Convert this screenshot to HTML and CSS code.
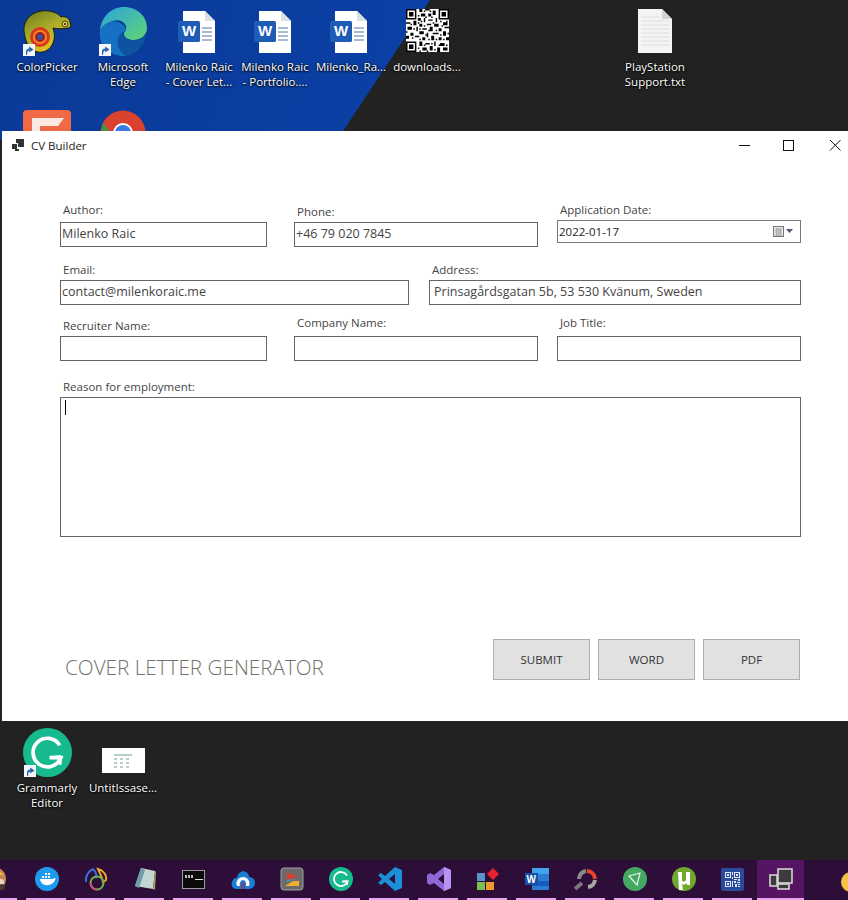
FILE: index.html
```html
<!DOCTYPE html>
<html>
	<head>
		<meta charset="utf-8">
		<title>CV Builder</title>
		<link rel="stylesheet" href="styles.css">
	</head>
	<body>
		<svg class="defs" width="0" height="0">
			<defs>
				<linearGradient id="edgeA" x1="0" y1="0" x2="1" y2="1">
					<stop offset="0" stop-color="#2aa3e0"/>
					<stop offset="1" stop-color="#5fd66f"/>
				</linearGradient>
				<linearGradient id="chamA" x1="0" y1="0" x2="0.6" y2="1">
					<stop offset="0" stop-color="#6d7a1c"/>
					<stop offset="0.5" stop-color="#a8ab2a"/>
					<stop offset="1" stop-color="#f0c81e"/>
				</linearGradient>
				<symbol id="word" viewBox="0 0 44 44">
					<path d="M6 1h22l10 10v32H6z" fill="#fff"/>
					<path d="M28 1v10h10z" fill="#dcdfe4"/>
					<path d="M25 17h10v2H25zM25 21h10v2H25zM25 25h10v2H25zM25 29h10v2H25z" fill="#a6b9d6"/>
					<rect x="1" y="11" width="22" height="21" rx="1.5" fill="#1f5cb8"/>
				</symbol>
				<symbol id="short" viewBox="0 0 12 12">
					<rect width="12" height="12" fill="#f4f6fa"/>
					<path d="M3 11V7.500Q3 4.800 6.200 4.500V2.500L10.500 5.500 6.200 8.500V6.600Q4.600 6.800 4.300 8.500L4 11z" fill="#2a62b0"/>
				</symbol>
				<symbol id="gcircle" viewBox="0 0 48 48">
					<circle cx="24" cy="24" r="24" fill="#17b98f"/>
					<path d="M36 17A14 14 0 1 0 37 29H26" fill="none" stroke="#fff" stroke-width="3.600"/>
					<path d="M37 28l-1 8M37 28l-8 1" fill="none" stroke="#fff" stroke-width="3.200"/>
				</symbol>
				<symbol id="qr" viewBox="0 0 29 29">
					<path fill="#fff" d="M0 0h29v29H0z"/>
					<path fill="#000" fill-rule="evenodd" d="M0 0h7v7H0zM1 1v5h5V1zM2 2h3v3H2zM22 0h7v7h-7zM23 1v5h5V1zM24 2h3v3h-3zM0 22h7v7H0zM1 23v5h5v-5zM2 24h3v3H2z"/>
					<path fill="#000" d="M9 0h2v2H9zM13 0h3v1h-3zM18 1h2v3h-2zM10 3h3v2h-3zM15 3h2v2h-2zM8 6h2v2H8zM12 6h1v3h-1zM15 7h3v1h-3zM20 6h1v3h-1zM0 9h3v1H0zM5 8h2v3H5zM9 10h2v2H9zM14 10h3v1h-3zM19 10h3v2h-3zM25 9h3v2h-3zM1 12h3v2H1zM7 12h1v3H7zM11 13h3v1h-3zM16 12h2v3h-2zM22 13h2v2h-2zM26 12h3v1h-3zM3 16h2v2H3zM9 15h3v2H9zM14 16h1v3h-1zM19 16h3v1h-3zM25 15h2v3h-2zM0 18h2v2H0zM6 18h3v1H6zM11 19h2v2h-2zM17 18h2v3h-2zM22 19h2v2h-2zM27 19h2v2h-2zM9 22h2v3H9zM13 23h3v1h-3zM19 22h1v3h-1zM23 23h3v2h-3zM11 26h3v2h-3zM16 25h2v3h-2zM21 26h2v3h-2zM25 26h3v2h-3zM12 1h1v1h-1zM16 1h1v1h-1zM8 4h1v1H8zM13 5h1v1h-1zM17 5h1v1h-1zM10 8h1v1h-1zM3 10h1v1H3zM8 9h1v1H8zM12 11h1v1h-1zM18 9h1v1h-1zM23 8h1v1h-1zM27 8h1v1h-1zM5 13h1v1H5zM9 13h1v1H9zM15 14h1v1h-1zM20 14h1v1h-1zM24 11h1v1h-1zM0 15h1v1H0zM13 17h1v1h-1zM18 16h1v1h-1zM23 17h1v1h-1zM28 16h1v1h-1zM4 19h1v1H4zM9 20h1v1H9zM15 20h1v1h-1zM20 20h1v1h-1zM25 20h1v1h-1zM8 26h1v1H8zM12 24h1v1h-1zM17 23h1v1h-1zM22 24h1v1h-1zM27 24h1v1h-1zM14 28h1v1h-1zM19 27h1v1h-1zM9 28h1v1H9z"/>
				</symbol>
			</defs>
		</svg>

		<div class="wallpaper"></div>

		<div class="icons icons-top">
			<div class="icon">
				<div class="pic">
					<svg width="50" height="46" viewBox="0 0 50 46">
						<path d="M2 22C1 9 13 0 27 2c6 1 10 3 12 6 3-1 8 0 9 5 1 3 1 6-2 6-5 1-11 1-15 0 2 6 2 12-1 17-3 6-11 9-17 6C6 39 3 31 2 22z" fill="url(#chamA)" stroke="#1a1a0a" stroke-width="1"/>
						<circle cx="18" cy="28" r="10" fill="#d9381e"/>
						<circle cx="18" cy="28" r="7" fill="#f28a1c"/>
						<circle cx="18" cy="28" r="5" fill="#9c1c2c"/>
						<circle cx="18" cy="28" r="2.800" fill="#2a55a8"/>
						<circle cx="43" cy="15" r="3" fill="#e0d14a" stroke="#222" stroke-width=".8"/>
						<circle cx="43" cy="15" r="1" fill="#222"/>
					</svg>
					<svg class="shortcut"><use href="#short"/></svg>
				</div>
				<span>ColorPicker</span>
			</div>
			<div class="icon">
				<div class="pic edge">
					<svg width="50" height="50" viewBox="0 0 50 50">
						<path d="M2 24C3 10 13 0 26 0c13 0 23 9 23 21 0 7-6 12-13 12-5 0-10-2-10-6 0-3 3-4 2-8-2-5-8-7-13-5C8 16 4 19 2 24z" fill="url(#edgeA)"/>
						<path d="M2 24c3-7 11-11 18-9 5 2 8 5 8 9-5 1-9 6-8 13 1 5 4 9 8 12C13 50 0 40 2 24z" fill="#1571c4"/>
						<path d="M26 27c0 4 5 6 10 6 5 0 9-2 12-6-1 11-10 21-20 22-5-3-8-7-8-12-1-7 3-12 6-10z" fill="#0d539f"/>
					</svg>
					<svg class="shortcut"><use href="#short"/></svg>
				</div>
				<span>Microsoft<br>Edge</span>
			</div>
			<div class="icon">
				<div class="pic doc"><svg width="44" height="44"><use href="#word"/></svg><b class="w">W</b></div>
				<span>Milenko Raic<br>- Cover Let...</span>
			</div>
			<div class="icon">
				<div class="pic doc"><svg width="44" height="44"><use href="#word"/></svg><b class="w">W</b></div>
				<span>Milenko Raic<br>- Portfolio....</span>
			</div>
			<div class="icon">
				<div class="pic doc"><svg width="44" height="44"><use href="#word"/></svg><b class="w">W</b></div>
				<span>Milenko_Ra...</span>
			</div>
			<div class="icon">
				<div class="pic"><svg width="43" height="43"><use href="#qr"/></svg></div>
				<span>downloads...</span>
			</div>
			<div class="icon txt">
				<div class="pic">
					<svg width="34" height="44" viewBox="0 0 34 44">
						<path d="M0 0h24l10 10v34H0z" fill="#f4f4f4"/>
						<path d="M24 0v10h10z" fill="#d4d4d4"/>
						<path d="M3 8h19M3 12h28M3 16h28M3 20h28M3 24h28M3 28h28M3 32h28M3 36h28" stroke="#dedede"/>
					</svg>
				</div>
				<span>PlayStation<br>Support.txt</span>
			</div>
			<div class="icon second">
				<div class="pic">
					<svg width="50" height="50" viewBox="0 0 50 50">
						<rect x="1" width="48" height="50" rx="4" fill="#ef6a45"/>
						<path d="M10 8h32l-6 8H18v20h-8z" fill="#fbe9e2"/>
					</svg>
				</div>
			</div>
			<div class="icon second">
				<div class="pic">
					<svg width="46" height="46" viewBox="0 0 46 46">
						<circle cx="23" cy="23" r="22.500" fill="#d8422e"/>
						<path d="M3 12L14 30 23 45C10 45 0 35 1 23z" fill="#2f9e44"/>
						<circle cx="23" cy="23" r="10" fill="#fff"/>
						<circle cx="23" cy="23" r="8" fill="#3b78e0"/>
					</svg>
				</div>
			</div>
		</div>

		<div class="icons icons-bottom">
			<div class="icon">
				<div class="pic">
					<svg width="49" height="49"><use href="#gcircle"/></svg>
					<svg class="shortcut"><use href="#short"/></svg>
				</div>
				<span>Grammarly<br>Editor</span>
			</div>
			<div class="icon">
				<div class="pic thumb">
					<svg width="43" height="25" viewBox="0 0 43 25">
						<rect width="43" height="25" fill="#fff"/>
						<path d="M12 6h18v2H12zM12 10h3v2h-3zM18 10h3v2h-3zM24 10h3v2h-3zM12 14h3v2h-3zM18 14h3v2h-3zM24 14h3v2h-3zM12 18h3v2h-3zM18 18h3v2h-3zM24 18h3v2h-3z" fill="#b9cfc9"/>
					</svg>
				</div>
				<span>UntitIssase...</span>
			</div>
		</div>

		<div class="window">
			<div class="titlebar">
				<svg class="appicon" width="12" height="12" viewBox="0 0 12 12">
					<path d="M0 5h5v5H0zM4 0h8v8H6V4H4zM3 10h4v2H3z" fill="#333"/>
				</svg>
				<span class="apptitle">CV Builder</span>
				<div class="controls">
					<svg width="46" height="12" viewBox="0 0 46 12"><path d="M28 6.500h11" stroke="#111"/></svg>
					<svg width="46" height="12" viewBox="0 0 46 12"><rect x="26.500" y="1.500" width="10" height="10" fill="none" stroke="#111"/></svg>
					<svg width="46" height="12" viewBox="0 0 46 12"><path d="M27 1l10.500 10.500M37.500 1L27 11.500" stroke="#111"/></svg>
				</div>
			</div>

			<form class="form">
				<div class="row row1">
					<div class="field w207 low"><label>Author:</label><input type="text" value="Milenko Raic"></div>
					<div class="field w244 mid"><label>Phone:</label><input type="text" value="+46 79 020 7845"></div>
					<div class="field w244 datefield">
						<label>Application Date:</label>
						<div class="date">
							<span>2022-01-17</span>
							<svg width="22" height="12" viewBox="0 0 22 12">
								<rect x=".5" y=".5" width="10" height="10" fill="#e8e8e8" stroke="#777"/>
								<path d="M2 3h7M2 5h7M2 7h7M2 9h7M3.500 2v8M5.500 2v8M7.500 2v8" stroke="#9a9a9a" stroke-width=".7"/>
								<path d="M13 3h7l-3.500 4z" fill="#4a5a78"/>
							</svg>
						</div>
					</div>
				</div>
				<div class="row row2">
					<div class="field w349"><label>Email:</label><input type="text" value="contact@milenkoraic.me"></div>
					<div class="field w372"><label>Address:</label><input class="pad" type="text" value="Prinsagårdsgatan 5b, 53 530 Kvänum, Sweden"></div>
				</div>
				<div class="row row3">
					<div class="field w207"><label>Recruiter Name:</label><input type="text"></div>
					<div class="field w244 high mid"><label>Company Name:</label><input type="text"></div>
					<div class="field w244 high"><label>Job Title:</label><input type="text"></div>
				</div>
				<div class="reason">
					<label>Reason for employment:</label>
					<div class="areawrap">
						<textarea></textarea>
						<i class="caret"></i>
					</div>
				</div>
				<div class="footer">
					<div class="brand">COVER LETTER GENERATOR</div>
					<div class="buttons">
						<button type="button">SUBMIT</button>
						<button type="button">WORD</button>
						<button type="button">PDF</button>
					</div>
				</div>
			</form>
		</div>

		<div class="taskbar">
			<div class="task">
				<svg width="24" height="24" viewBox="0 0 24 24">
					<circle cx="8" cy="12" r="12" fill="#c9855a"/>
					<path d="M-2 8Q8-2 18 8L14 8Q8 4 2 8z" fill="#d9482e"/>
					<path d="M12 3l6 5-4 0z" fill="#f0c23a"/>
					<circle cx="15" cy="15" r="3" fill="#e8d6c6"/>
					<circle cx="16" cy="20" r="3" fill="#4a3a30"/>
				</svg>
			</div>
			<div class="task">
				<svg width="24" height="24" viewBox="0 0 24 24">
					<circle cx="12" cy="12" r="12" fill="#1d9bf0"/>
					<path d="M5 12h13c1-1 2-1 2.500-.8-.5 4-4 7-8.500 7-4 0-6.500-2.500-7-6.200zM7 9h2v2H7zM10 9h2v2h-2zM13 9h2v2h-2zM10 6h2v2h-2zM13 6h2v2h-2z" fill="#fff"/>
				</svg>
			</div>
			<div class="task">
				<svg width="24" height="24" viewBox="0 0 24 24" fill="none" stroke-width="2">
					<path d="M9 2C4 4 1 10 2 15" stroke="#3f6fd8"/>
					<path d="M9 2c3 3 4 6 3 9" stroke="#3f6fd8"/>
					<path d="M14 2c5 1 9 6 8 11l-3 2c-1-5-3-9-5-13z" stroke="#e8a72a"/>
					<circle cx="13" cy="16" r="6.500" stroke="#6bb34a"/>
					<path d="M6.500 16a6.500 6.500 0 0 0 6.500 6.500" stroke="#d9487e"/>
				</svg>
			</div>
			<div class="task">
				<svg width="24" height="24" viewBox="0 0 24 24">
					<path d="M8 1l14 3-2 18-18-3z" fill="#c4d6d2"/>
					<path d="M8 1L2 19l4 2 6-18z" fill="#6f9cab"/>
					<path d="M20 22l2-18 1 1-1 18z" fill="#b09a62"/>
				</svg>
			</div>
			<div class="task">
				<svg width="23" height="19" viewBox="0 0 23 19">
					<rect x=".5" y=".5" width="22" height="18" fill="#0b0b0b" stroke="#9a9a9a"/>
					<path d="M3 5h2v3H3zM6 5h2v3H6zM9 5h2v3H9z" fill="#bbb"/>
					<path d="M13 9h8v1h-8z" fill="#ddd"/>
				</svg>
			</div>
			<div class="task">
				<svg width="24" height="20" viewBox="0 0 24 20">
					<path d="M6 20C1 20-1 15 2 11c1-2 3-2 4-2 1-5 5-8 9-6 2 1 3 3 3 5 4 0 6 3 6 6s-3 6-6 6z" fill="#1b7fd8"/>
					<path d="M6 17c-2-5 2-9 6-9s8 4 6 9h-3c1-3-1-6-3-6s-4 3-3 6z" fill="#fff"/>
					<path d="M10 20v-5a2 2 0 0 1 4 0v5z" fill="#6b4a78"/>
				</svg>
			</div>
			<div class="task">
				<svg width="24" height="24" viewBox="0 0 24 24">
					<rect x="1" y="1" width="22" height="22" rx="3" fill="#6b6b6b" stroke="#a0a0a0"/>
					<path d="M7 5l11 5-11 3z" fill="#dd3f31"/>
					<path d="M7 13l9-1-9 3z" fill="#3aa0c8"/>
					<path d="M5 19l8-5h6v5z" fill="#eeb02c"/>
				</svg>
			</div>
			<div class="task"><svg width="24" height="24"><use href="#gcircle"/></svg></div>
			<div class="task">
				<svg width="24" height="24" viewBox="0 0 24 24">
					<path d="M17 0l7 3v18l-7 3-10-9-4 3-3-2 4-4-4-4 3-2 4 3zM17 7l-6 5 6 5z" fill="#1b8fd8"/>
				</svg>
			</div>
			<div class="task">
				<svg width="24" height="24" viewBox="0 0 24 24">
					<path d="M17 0l7 3v18l-7 3-10-8-4 2-3-2V8l3-2 4 2zM17 7l-6 5 6 5z" fill="#8f68d8"/>
					<path d="M17 0l7 3v18l-7 3z" fill="#b794ee"/>
				</svg>
			</div>
			<div class="task">
				<svg width="24" height="24" viewBox="0 0 24 24">
					<rect x="1" y="6" width="8" height="8" fill="#5b93cf"/>
					<rect x="1" y="15" width="8" height="8" fill="#7ebd4f"/>
					<rect x="10" y="15" width="8" height="8" fill="#f09a2e"/>
					<path d="M17 1l6 6-6 6-6-6z" fill="#e8202e"/>
				</svg>
			</div>
			<div class="task">
				<svg width="24" height="24" viewBox="0 0 24 24">
					<rect x="7" y="1" width="17" height="22" rx="1" fill="#2b7cd3"/>
					<rect x="7" y="1" width="17" height="6" fill="#41a5ee"/>
					<rect x="7" y="14" width="17" height="5" fill="#185abd"/>
					<rect x="0" y="6" width="13" height="12" fill="#1650a8"/>
					<text x="1.500" y="15.500" font-size="10" font-weight="700" fill="#fff" font-family="Liberation Sans">W</text>
				</svg>
			</div>
			<div class="task">
				<svg width="24" height="24" viewBox="0 0 24 24" fill="none" stroke-width="4">
					<path d="M13 4a8 8 0 0 1 8 8" stroke="#e8452c"/>
					<path d="M21 13a8 8 0 0 1-7 7" stroke="#a8a8a8"/>
					<path d="M12 4a8 8 0 0 0-7 8" stroke="#8a8a8a"/>
					<path d="M1 22l7-6" stroke="#777"/>
				</svg>
			</div>
			<div class="task">
				<svg width="24" height="24" viewBox="0 0 24 24">
					<circle cx="12" cy="12" r="12" fill="#45a862"/>
					<path d="M6 9l11-3-3 12z" fill="none" stroke="#e8f5ec" stroke-width="1.200"/>
				</svg>
			</div>
			<div class="task">
				<svg width="24" height="24" viewBox="0 0 24 24">
					<circle cx="12" cy="12" r="12" fill="#72a82e"/>
					<path d="M6 5h4v8c0 2 3 2 4 0V5h4v13h-3v-2c-2 2-4 2-5 1l1 6H7z" fill="#fff"/>
				</svg>
			</div>
			<div class="task">
				<svg width="23" height="23" viewBox="0 0 23 23">
					<rect width="23" height="23" rx="2" fill="#2a4a9c"/>
					<path fill="#dfe6f5" fill-rule="evenodd" d="M4 4h6v6H4zM5 5v4h4V5zM13 4h6v6h-6zM14 5v4h4V5zM4 13h6v6H4zM5 14v4h4v-4zM6 6h2v2H6zM15 6h2v2h-2zM6 15h2v2H6zM11 4h1v3h-1zM11 9h1v2h-1zM13 11h3v1h-3zM17 11h2v2h-2zM13 13h2v2h-2zM16 14h3v1h-3zM14 16h2v3h-2zM17 16h2v1h-2zM17 18h2v1h-2zM11 13h1v6h-1z"/>
				</svg>
			</div>
			<div class="task active">
				<svg width="24" height="22" viewBox="0 0 24 22">
					<rect x="9" y="1" width="14" height="14" fill="#3c3c3c" stroke="#dcdcdc" stroke-width="1.500"/>
					<path d="M8 7H1v11h7z" fill="#3c3c3c" stroke="#dcdcdc" stroke-width="1.500"/>
					<rect x="9" y="16" width="11" height="5" fill="#3c3c3c" stroke="#dcdcdc" stroke-width="1.500"/>
				</svg>
			</div>
			<div class="coin"></div>
		</div>
	</body>
</html>
```

FILE: styles.css
```css
html, body{
	margin: 0;
	padding: 0;
}
body{
	width: 848px;
	height: 900px;
	overflow: hidden;
	position: relative;
	background-color: #222222;
	font-family: "Open Sans", "Noto Sans", sans-serif;
}
.defs{
	position: absolute;
}
.wallpaper{
	position: absolute;
	left: 0;
	top: 0;
	width: 440px;
	height: 140px;
	background: linear-gradient(100deg, #0b3a98, #0a40a6);
	clip-path: polygon(0 0, 430px 0, 343px 131px, 343px 140px, 0 140px);
}

/* desktop icons */
.icons{
	position: absolute;
	display: grid;
	grid-template-columns: repeat(9, 76px);
}
.icons-top{
	left: 9px;
	top: 9px;
	grid-auto-rows: 101px;
}
.icons-bottom{
	left: 9px;
	top: 728px;
}
.icon{
	display: flex;
	flex-direction: column;
	align-items: center;
	color: #fff;
	font-size: 11.5px;
	line-height: 15px;
	text-align: center;
	text-shadow: 0 1px 2px #000, 0 0 2px #000;
	white-space: nowrap;
}
.txt{
	grid-column: 9;
	grid-row: 1;
}
.second{
	grid-row: 2;
}
.pic{
	position: relative;
	height: 50px;
	display: flex;
	align-items: flex-start;
	justify-content: center;
}
.edge svg:first-child{
	margin-top: -2px;
}
.doc{
	padding-top: 1px;
	height: 49px;
}
.shortcut{
	position: absolute;
	left: 1px;
	bottom: 3px;
	width: 12px;
	height: 12px;
}
.w{
	position: absolute;
	left: 3px;
	top: 14px;
	width: 18px;
	text-align: center;
	font-family: "Liberation Sans", sans-serif;
	font-size: 15px;
	line-height: 16px;
	text-shadow: none;
}
.thumb{
	padding-top: 20px;
	height: 30px;
	margin-bottom: 2px;
}
.icons-bottom .icon:first-child .pic{
	margin-bottom: 2px;
}
.icons-bottom .shortcut{
	bottom: 1px;
}

/* window */
.window{
	position: absolute;
	left: 2px;
	top: 131px;
	width: 846px;
	height: 590px;
	background-color: #fff;
	color: #3f3f3f;
}
.titlebar{
	height: 29px;
	display: flex;
	align-items: center;
	padding-left: 10px;
}
.appicon{
	margin-top: -1px;
}
.apptitle{
	margin-left: 7px;
	margin-top: -1px;
	font-size: 11.5px;
	color: #222;
}
.controls{
	margin-left: auto;
	margin-right: -1px;
	display: flex;
	margin-top: -2px;
}
.form{
	padding: 43px 0 0 58px;
	width: 741px;
}
.row{
	display: flex;
	align-items: flex-end;
	justify-content: space-between;
}
.row2{
	margin-top: 16px;
}
.row3{
	margin-top: 11px;
}
.field{
	display: flex;
	flex-direction: column;
}
label{
	display: block;
	height: 14px;
	line-height: 14px;
	margin-bottom: 3px;
	padding-left: 3px;
	font-size: 11.5px;
	color: #444;
}
.low label{
	margin-bottom: 5px;
}
.high label{
	margin-bottom: 6px;
}
.w207{
	width: 207px;
}
.w244{
	width: 244px;
}
.w349{
	width: 349px;
}
.w372{
	width: 372px;
}
.mid{
	margin-left: 27px;
	margin-right: 19px;
}
input[type=text]{
	box-sizing: border-box;
	height: 25px;
	width: 100%;
	border: 1px solid #646464;
	border-radius: 0;
	outline: none;
	padding: 0 1px 2px;
	margin: 0;
	background-color: #fff;
	color: #444;
	font-family: "Open Sans", "Noto Sans", sans-serif;
	font-size: 12.5px;
}
input.pad{
	padding-left: 4px;
}
.datefield{
	margin-bottom: 4px;
}
.date{
	box-sizing: border-box;
	height: 23px;
	border: 1px solid #7a7a7a;
	display: flex;
	align-items: center;
	justify-content: space-between;
	padding: 0 5px 0 1px;
	font-size: 11.5px;
	color: #222;
}
.reason{
	margin-top: 19px;
}
.areawrap{
	position: relative;
	height: 140px;
}
textarea{
	display: block;
	box-sizing: border-box;
	width: 741px;
	height: 140px;
	border: 1px solid #646464;
	border-radius: 0;
	outline: none;
	resize: none;
	margin: 0;
}
.caret{
	position: absolute;
	left: 5px;
	top: 3px;
	width: 1px;
	height: 15px;
	background-color: #000;
}
.footer{
	display: flex;
	justify-content: space-between;
	align-items: flex-start;
	margin-top: 102px;
	padding-right: 1px;
}
.brand{
	margin: 15px 0 0 5px;
	font-size: 20.7px;
	line-height: 27px;
	font-weight: 300;
	color: #72726a;
	white-space: nowrap;
}
.buttons{
	display: flex;
	gap: 8px;
}
button{
	box-sizing: border-box;
	width: 97px;
	height: 41px;
	background-color: #e1e1e1;
	border: 1px solid #adadad;
	border-radius: 0;
	color: #333;
	font-family: "Open Sans", "Noto Sans", sans-serif;
	font-size: 11.5px;
	padding: 0;
}

/* taskbar */
.taskbar{
	position: absolute;
	left: 0;
	top: 860px;
	width: 848px;
	height: 40px;
	background-color: #2c0e39;
	display: flex;
}
.task{
	flex: none;
	box-sizing: border-box;
	width: 49px;
	height: 40px;
	display: flex;
	align-items: center;
	justify-content: center;
	padding-bottom: 2px;
	position: relative;
}
.task:first-child{
	margin-left: -27px;
}
.task::after{
	content: "";
	position: absolute;
	left: 4px;
	right: 5px;
	bottom: 0;
	height: 2px;
	background-color: #e7a3ec;
}
.active{
	width: 47px;
	background-color: #561463;
}
.active::after{
	left: 0;
	right: 0;
}
.coin{
	flex: none;
	margin: 12px 0 0 37px;
	width: 20px;
	height: 20px;
	border-radius: 50%;
	background-color: #f6c244;
}
```
